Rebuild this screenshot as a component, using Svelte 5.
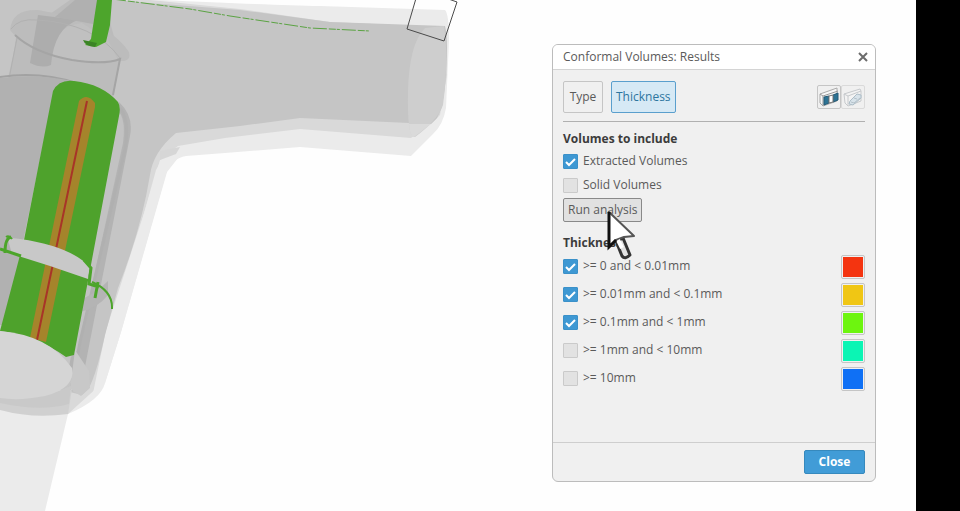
<script>
  let tab = $state('Thickness');
  let volumes = $state([
    { label: 'Extracted Volumes', on: true },
    { label: 'Solid Volumes', on: false }
  ]);
  let ranges = $state([
    { label: '>= 0 and < 0.01mm', on: true, color: '#f43410' },
    { label: '>= 0.01mm and < 0.1mm', on: true, color: '#f0c614' },
    { label: '>= 0.1mm and < 1mm', on: true, color: '#6df50f' },
    { label: '>= 1mm and < 10mm', on: false, color: '#0bf5b4' },
    { label: '>= 10mm', on: false, color: '#0f70f5' }
  ]);
</script>

<div class="app">
  <main class="viewport">
    <svg class="model" aria-hidden="true">
      <!-- outer shell -->
      <path fill="#ebebeb" d="M0 0H160Q270 5 320 6L445 10Q449 14 449 40L446 108Q443 125 433 134L411 156L300 147L225 153L186 156Q172 158 166 174L121 332L105 383Q101 400 68 414L45 511H0Z" />
      <path fill="#d9d9d9" d="M0 0H150L240 9L330 22L445 27L447 75L440 115L433 122L411 138L300 129L225 138L178 146Q162 156 156 170L112 330L100 385L68 414L0 405Z" />
      <path fill="#ebebeb" d="M160 160L180 147L178 158L167 172L121 332L105 383L92 398L106 330L119 290L145 210Z" />
      <path fill="#c5c5c5" d="M0 0H115L150 3L240 10L330 22L445 26Q449 40 445 85Q443 108 437 118L431 124L300 118L240 126L176 133Q153 152 150 175Q141 230 118 288L105 335Q97 372 89 388L82 395L0 375Z" />
      <path fill="#cecece" d="M444 26Q449 60 443 105Q438 120 415 137Q407 139 408 92Q409 44 425 28Z" />
      <path fill="#dadada" d="M409 124L431 124L414 137Q410 137 409 124Z" />
      <path fill="#d6d6d6" d="M160 151L180 147L176 154L160 160Z" />
      <!-- cylinder neck -->
      <path fill="#bbbbbb" d="M70 0H98L108 15L120 58L113 98L70 82L10 76L16 38L50 14Z" />
      <path fill="#bcbcbc" d="M10 30Q12 9 38 10L74 17Q112 27 129 52Q131 60 124 61L119 61L113 96Q85 78 8 78L17 38Z" />
      <path fill="#c0c0c0" d="M55 40Q60 26 82 23L108 40L118 60Q90 64 52 56Z" />
      <path fill="#adadad" d="M38 15L78 20Q54 28 51 65Q42 69 30 63Z" />
      <path fill="#b0b0b0" d="M75 0H99L93 24L55 17Z" />
      <path fill="none" stroke="#b1b1b1" d="M11 29Q19 18 37 20Q94 23 120 58M17 38L9 79" />
      <path fill="none" stroke="#a5a5a5" stroke-width="2" d="M15 35Q34 53 72 60Q105 65 120 59L113 95" />
      <path fill="none" stroke="#a2a2a2" stroke-width="2" d="M0 77Q40 71 76 83" />
      <!-- handle interior -->
      <path fill="#b1b1b1" d="M0 78Q40 73 76 82L54 91L6 325H0Z" />
      <path fill="#b3b3b3" d="M119 102Q134 116 130 136L82 382L68 372L76 330Z" />
      <path fill="#c2c2c2" d="M119 112Q126 120 123 143L78 350L70 358Z" />
      <path fill="none" stroke="#b0b0b0" stroke-width="3" d="M120 108Q130 120 125 149L80 342L71 391" />
      <path fill="#b4b4b4" d="M79 300Q94 295 108 281V295Q97 309 79 312Z" />
      <path fill="#c8c8c8" d="M75 350L89 371L90 388L81 396L70 389Z" />
      <path fill="#d0d0d0" d="M0 392Q48 400 72 389L68 414Q33 419 0 410Z" />
      <path fill="#c9c9c9" d="M0 397Q38 401 71 386L69 404Q40 412 0 403Z" />
      <!-- thickness bands -->
      <path fill="#4ea22c" d="M53 91Q59 79 74 81Q102 84 118 102Q121 107 119 116L74 355L66 357Q35 335 0 331L24 240Z" />
      <path fill="#a5842b" d="M79 101Q87 92 95 103V107L46 342L30 338Z" />
      <path fill="none" stroke="#a83428" stroke-width="2" d="M87 101L37 340" />
      <path fill="#d5d5d5" d="M0 331Q49 335 72 368Q76 388 45 396Q20 401 0 398Z" />
      <path fill="#c8c8c8" d="M8 240Q10 237 20 239Q70 246 90 267L88 279L50 266L12 254Z" />
      <g fill="none" stroke="#4ca52a" stroke-width="3">
        <path d="M11 237Q5 238 5 253M0 249L21 256M84 260L91 268L89 284L99 287M98 282L95 298" />
        <path stroke-width="2" d="M92 282Q113 291 112 309M6 237Q9 235 12 239" />
      </g>
      <!-- inlet -->
      <path fill="#4da52c" d="M97 0H112L110 25L106 42L96 47L85 45L91 39Z" />
      <path fill="#3b8425" d="M83 40L97 43L95 47Q85 46 83 40Z" />
      <path fill="none" stroke="#5ba343" stroke-dasharray="14 2 7 1 3 2" d="M112 -1L190 9L230 16L310 28L370 31" />
      <path fill="none" stroke="#4a4a4a" d="M417 -5L407 29L444 41L457 2L440 -4" />
    </svg>

    <section class="dialog" aria-labelledby="dialog-title">
      <header>
        <h1 id="dialog-title">Conformal Volumes: Results</h1>
        <button class="dismiss" aria-label="Close window">
          <svg width="10" height="10" viewBox="0 0 10 10"><path d="M1 1L9 9M9 1L1 9" fill="none" stroke="#6c6c6c" stroke-width="2" /></svg>
        </button>
      </header>

      <div class="content">
        <div class="toolbar">
          <div class="tabs">
            {#each ['Type', 'Thickness'] as name}
              <button class="tab" class:active={tab === name} aria-pressed={tab === name} onclick={() => (tab = name)}>{name}</button>
            {/each}
          </div>
          <div class="views">
            <button class="view" aria-label="Section view">
              <svg width="22" height="22" viewBox="0 0 22 22">
                <path d="M2 8L19 2V15L5 20L2 17Z" fill="#f8f8f8" stroke="#aaa" />
                <path d="M2 8L5 10L20 5M5 10V20" fill="none" stroke="#999" />
                <path d="M6 11L11 10V17L6 19ZM15 9L20 7V14L15 16Z" fill="#2d7394" stroke="#245a76" />
                <path d="M11 10L15 9V16L11 17Z" fill="#fff" stroke="#777" />
              </svg>
            </button>
            <button class="view" aria-label="Edit section" disabled>
              <svg width="22" height="22" viewBox="0 0 22 22" fill="none" stroke="#c6c9cc">
                <path d="M2 8L18 3L19 5V15L6 20L3 17Z" fill="#f3f3f3" />
                <path d="M2 8L6 10L19 5M6 10V19" />
                <path d="M8 15L15 8L19 9V12L11 19L7 18Z" fill="#d8e3ea" stroke="#adbdc7" />
                <path d="M9 16L12 17L18 12M12 12L15 13" stroke="#b5c2ca" />
              </svg>
            </button>
          </div>
        </div>

        <h2>Volumes to include</h2>
        {#each volumes as item}
          <label class="volume"><input type="checkbox" bind:checked={item.on} />{item.label}</label>
        {/each}
        <button class="run">Run analysis</button>

        <h2 class="second">Thickness</h2>
        {#each ranges as item}
          <div class="range">
            <label><input type="checkbox" bind:checked={item.on} />{item.label}</label>
            <button class="swatch" aria-label={`Colour for ${item.label}`}><span style:background={item.color}></span></button>
          </div>
        {/each}
      </div>

      <footer><button class="close">Close</button></footer>

      <svg class="pointer" width="30" height="52" viewBox="0 0 30 52" aria-hidden="true">
        <path d="M10 32L16 47Q19 51 24 46L17 29Z" fill="#e2e2e2" stroke="#333" stroke-width="3" stroke-linejoin="round" />
        <path d="M3 3V38L10 31L18 28L28 27Z" fill="#fff" stroke="#555" stroke-width="2" stroke-linejoin="round" />
        <path d="M12 31L16 39" fill="none" stroke="#fff" stroke-width="4" />
        <path d="M3 3V38L10 31" fill="none" stroke="#111" stroke-width="3" />
      </svg>
    </section>
  </main>
</div>

<style>
  :global(body) { margin: 0; }
  .app {
    box-sizing: border-box;
    min-height: 100vh;
    padding-right: 44px;
    background: #000;
    display: flex;
    font: 12px/16px "Open Sans", "Noto Sans", sans-serif;
    color: #5a5a5a;
  }
  .viewport { position: relative; flex: 1; background: #fefefe; overflow: hidden; }
  .model { position: absolute; width: 100%; height: 100%; }
  .dialog {
    position: absolute;
    top: 44px;
    right: 40px;
    box-sizing: border-box;
    width: 324px;
    border: 1px solid #bcbcbc;
    border-radius: 6px;
    background: #f0f0f0;
  }
  header {
    display: flex;
    align-items: center;
    justify-content: space-between;
    height: 24px;
    padding: 0 6px 0 10px;
    border-bottom: 1px solid #d4d4d4;
    border-radius: 5px 5px 0 0;
    background: #fff;
  }
  h1, h2 { margin: 0; font-size: 12px; line-height: 16px; }
  h1 { font-weight: 400; }
  h2 { color: #3c3c3c; font-weight: 700; }
  button {
    box-sizing: border-box;
    display: flex;
    align-items: center;
    justify-content: center;
    padding: 0;
    border: 1px solid #c5c5c5;
    border-radius: 2px;
    background: #f0f0f0;
    color: inherit;
    font: inherit;
  }
  .dismiss { width: 12px; height: 16px; border: 0; background: none; }
  .content { padding: 11px 10px 49px; }
  .toolbar {
    display: flex;
    align-items: center;
    justify-content: space-between;
    padding-bottom: 8px;
    border-bottom: 1px solid #b0b0b0;
    margin-bottom: 9px;
  }
  .tabs { display: flex; gap: 8px; }
  .tab { min-width: 40px; height: 32px; padding: 0 4px; }
  .tab.active { border-color: #5a9fcd; background: #d6e9f5; color: #2d759f; }
  .views { display: flex; }
  .view { width: 24px; height: 24px; }
  .view:disabled { border-color: #dadada; }
  label { display: flex; align-items: center; gap: 5px; }
  .volume { height: 24px; }
  .volume + .run { margin-top: 1px; }
  h2 + .volume { margin-top: 2px; }
  input {
    appearance: none;
    box-sizing: border-box;
    width: 15px;
    height: 15px;
    margin: 0;
    border: 1px solid #cacaca;
    border-radius: 1px;
    background: #e2e2e2;
  }
  input:checked {
    border-color: #3b91c9;
    background: #3e98d3 url("data:image/svg+xml,%3Csvg xmlns='http://www.w3.org/2000/svg' viewBox='0 0 13 13'%3E%3Cpath d='M2 7l3 3 6-6' fill='none' stroke='white' stroke-width='2'/%3E%3C/svg%3E") center / 13px no-repeat;
  }
  .run { height: 24px; padding: 0 4px; border-color: #898989; background: #e1e1e1; }
  .second { margin: 13px 0 2px; }
  .range { display: flex; align-items: center; justify-content: space-between; height: 28px; }
  .range label { padding-bottom: 2px; }
  .swatch { width: 24px; height: 24px; }
  .swatch span { width: 20px; height: 20px; }
  footer { display: flex; justify-content: flex-end; padding: 7px 10px; border-top: 1px solid #cecece; }
  .close { width: 61px; height: 24px; border-color: #3689bd; background: #419cd7; color: #fff; font-weight: 700; }
  .pointer { position: absolute; top: 164px; left: 53px; pointer-events: none; }
</style>
